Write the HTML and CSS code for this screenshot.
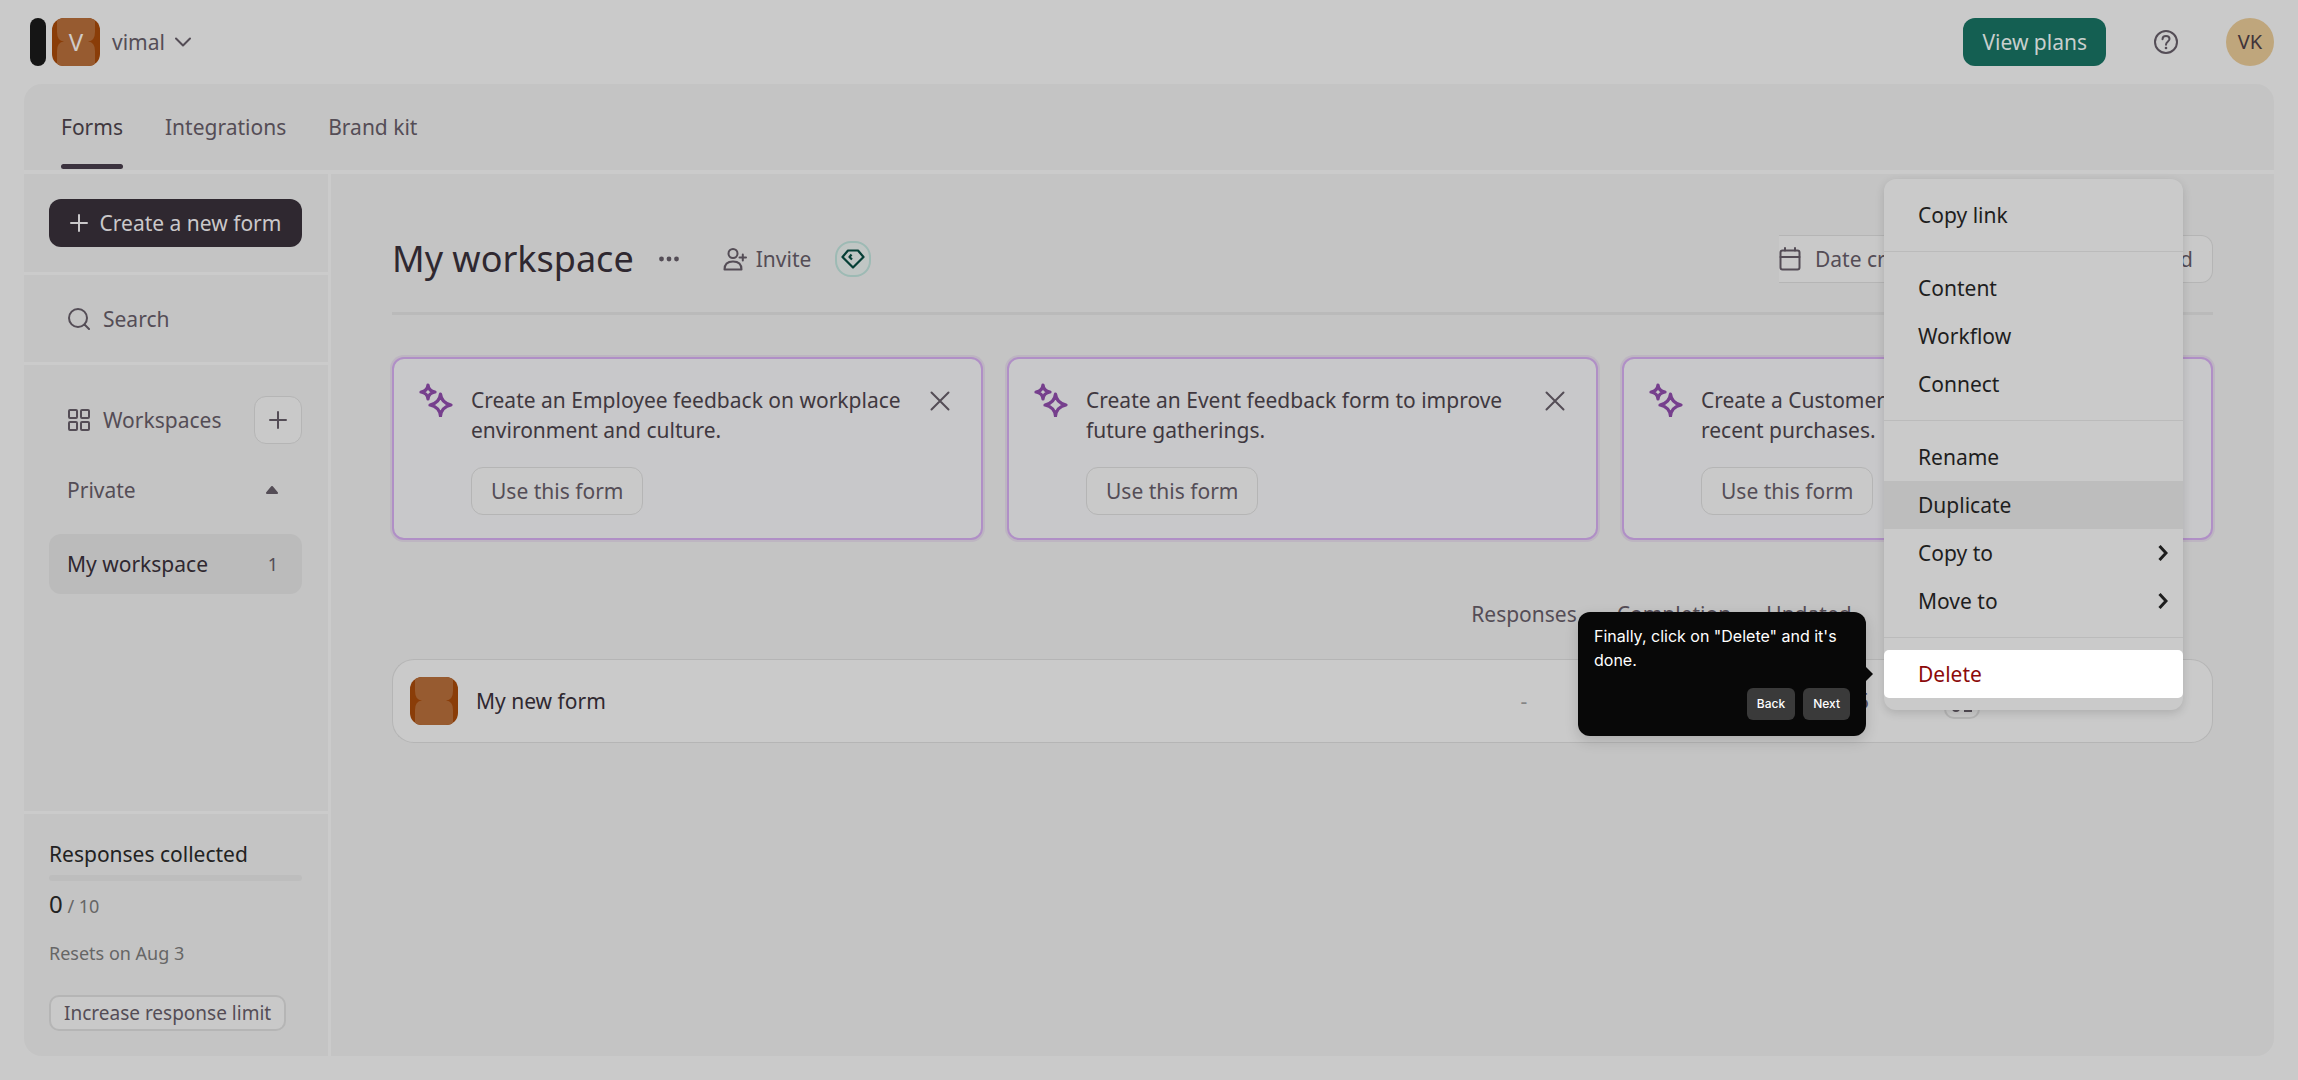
FILE: index.html
```html
<!DOCTYPE html>
<html lang="en">
<head>
<meta charset="utf-8">
<meta name="viewport" content="width=device-width, initial-scale=1">
<title>My workspace</title>
<link rel="stylesheet" href="styles.css">
</head>
<body>
<svg class="defs" width="0" height="0" aria-hidden="true">
  <symbol id="tile" viewBox="0 0 48 48"><rect width="48" height="48" fill="#8a3d08"/><path d="M5 0H43V14Q43 23 36 23.500Q43 24 43 33V48H5V33Q5 24 12 23.500Q5 23 5 14Z" fill="#975b30"/></symbol>
  <symbol id="plus" viewBox="0 0 18 18"><path d="M9 1V17M1 9H17" fill="none" stroke="currentColor" stroke-width="2" stroke-linecap="round"/></symbol>
  <symbol id="sparkle" viewBox="0 0 34 34"><path d="M9 2Q9.500 8 16 9Q9.500 10 9 16Q8.500 10 2 9Q8.500 8 9 2ZM21.500 11Q22.500 20 32 22Q22.500 24 21.500 33Q20.500 24 11 22Q20.500 20 21.500 11Z" fill="none" stroke="currentColor" stroke-width="3.200" stroke-linejoin="round"/></symbol>
  <symbol id="cross" viewBox="0 0 20 20"><path d="M1.500 1.500L18.500 18.500M18.500 1.500L1.500 18.500" fill="none" stroke="currentColor" stroke-width="2" stroke-linecap="round"/></symbol>
  <symbol id="arrow" viewBox="0 0 10 16"><path d="M1.500 1L8 8L1.500 15" fill="none" stroke="currentColor" stroke-width="3"/></symbol>
</svg>

<header class="topbar">
  <span class="brand-mark"></span>
  <button class="account" type="button">
    <span class="avatar"><svg class="tile"><use href="#tile"/></svg><span class="avatar-letter">V</span></span>
    <span>vimal</span>
    <svg class="chevron" width="16" height="10" viewBox="0 0 16 10"><path d="M1 1.500L8 8.500L15 1.500" fill="none" stroke="currentColor" stroke-width="2" stroke-linecap="round" stroke-linejoin="round"/></svg>
  </button>
  <button class="btn plans" type="button">View plans</button>
  <button class="icon-btn help" type="button" aria-label="Help">
    <svg width="24" height="24" viewBox="0 0 24 24" fill="none" stroke="currentColor" stroke-width="2"><circle cx="12" cy="12" r="11"/><path d="M8.500 9.300C8.500 7.300 10 6 12 6s3.500 1.300 3.500 3.100C15.500 11.500 12 11.700 12 14.700" stroke-linecap="round"/><circle cx="12" cy="18" r="1.300" fill="currentColor" stroke="none"/></svg>
  </button>
  <button class="user" type="button">VK</button>
</header>

<div class="panel">
  <nav class="tabs">
    <a class="tab active" href="#forms">Forms</a>
    <a class="tab" href="#integrations">Integrations</a>
    <a class="tab" href="#brand">Brand kit</a>
  </nav>

  <div class="body">
    <aside class="sidebar">
      <div class="side-create">
        <button class="btn create" type="button"><svg width="18" height="18"><use href="#plus"/></svg>Create a new form</button>
      </div>
      <div class="side-search">
        <button class="side-link" type="button">
          <svg width="22" height="22" viewBox="0 0 22 22" fill="none" stroke="currentColor" stroke-width="2"><circle cx="10" cy="10" r="9"/><path d="M16.500 16.500L21 21" stroke-linecap="round"/></svg>Search
        </button>
      </div>
      <div class="side-spaces">
        <div class="spaces-head">
          <span class="side-link">
            <svg width="22" height="22" viewBox="0 0 22 22" fill="none" stroke="currentColor" stroke-width="2"><rect x="1" y="1" width="8" height="8" rx="1"/><rect x="13" y="1" width="8" height="8" rx="1"/><rect x="1" y="13" width="8" height="8" rx="1"/><rect x="13" y="13" width="8" height="8" rx="1"/></svg>Workspaces
          </span>
          <button class="btn outline add" type="button" aria-label="Add workspace"><svg width="18" height="18"><use href="#plus"/></svg></button>
        </div>
        <button class="group" type="button"><span>Private</span><svg width="12" height="8" viewBox="0 0 12 8"><path d="M6 1L11 7H1Z" fill="currentColor" stroke="currentColor" stroke-width="2" stroke-linejoin="round"/></svg></button>
        <a class="space" href="#my-workspace"><span>My workspace</span><span class="count">1</span></a>
      </div>
      <div class="side-usage">
        <h2 class="usage-title">Responses collected</h2>
        <div class="usage-bar"></div>
        <p class="usage-count"><span class="usage-value">0</span> / 10</p>
        <p class="usage-reset">Resets on Aug 3</p>
        <button class="btn outline limit" type="button">Increase response limit</button>
      </div>
    </aside>

    <main class="main">
      <div class="title-row">
        <h1 class="title">My workspace</h1>
        <button class="icon-btn more" type="button" aria-label="More"><svg width="20" height="6" viewBox="0 0 20 6" fill="currentColor"><circle cx="2.500" cy="3" r="2.400"/><circle cx="10" cy="3" r="2.400"/><circle cx="17.500" cy="3" r="2.400"/></svg></button>
        <button class="icon-btn invite" type="button">
          <svg width="24" height="24" viewBox="0 0 24 24" fill="none" stroke="currentColor" stroke-width="2" stroke-linecap="round" stroke-linejoin="round"><circle cx="10" cy="6.500" r="4.500"/><path d="M1.500 22.500Q1.500 14.500 10 14.500T18.500 22.500Z"/><path d="M16.500 10.500H23M19.800 7.500V13.500"/></svg>Invite
        </button>
        <button class="gem" type="button" aria-label="Upgrade"><svg width="24" height="20" viewBox="0 0 24 20" fill="none" stroke="currentColor" stroke-width="2.200" stroke-linejoin="round"><path d="M7 1.500H17L22.500 8L12 18.500L1.500 8Z"/><path d="M10.500 5.500L8.500 8L11 10.500"/></svg></button>
        <div class="toolbar">
          <button class="sort" type="button">
            <svg width="22" height="24" viewBox="0 0 22 24" fill="none" stroke="currentColor" stroke-width="2" stroke-linejoin="round"><rect x="1.500" y="3.500" width="19" height="19" rx="2"/><path d="M1.500 10H20.500M6 1V3.500M16 1V3.500" stroke-linecap="round"/></svg>Date created
          </button>
          <button class="sort" type="button">Grid</button>
        </div>
      </div>

      <div class="cards">
        <article class="card">
          <svg class="spark" width="34" height="34"><use href="#sparkle"/></svg>
          <div class="card-body"><p class="card-text">Create an Employee feedback on workplace environment and culture.</p><button class="btn outline" type="button">Use this form</button></div>
          <button class="icon-btn close" type="button" aria-label="Dismiss"><svg width="20" height="20"><use href="#cross"/></svg></button>
        </article>
        <article class="card">
          <svg class="spark" width="34" height="34"><use href="#sparkle"/></svg>
          <div class="card-body"><p class="card-text">Create an Event feedback form to improve future gatherings.</p><button class="btn outline" type="button">Use this form</button></div>
          <button class="icon-btn close" type="button" aria-label="Dismiss"><svg width="20" height="20"><use href="#cross"/></svg></button>
        </article>
        <article class="card">
          <svg class="spark" width="34" height="34"><use href="#sparkle"/></svg>
          <div class="card-body"><p class="card-text">Create a Customer<br>recent purchases.</p><button class="btn outline" type="button">Use this form</button></div>
          <button class="icon-btn close" type="button" aria-label="Dismiss"><svg width="20" height="20"><use href="#cross"/></svg></button>
        </article>
      </div>

      <table class="forms">
        <colgroup><col><col class="c-responses"><col class="c-completion"><col class="c-updated"><col class="c-apps"><col class="c-actions"></colgroup>
        <thead><tr><th></th><th>Responses</th><th>Completion</th><th>Updated</th><th></th><th></th></tr></thead>
        <tbody>
          <tr>
            <td><a class="form-name" href="#form"><svg class="tile"><use href="#tile"/></svg>My new form</a></td>
            <td class="muted">-</td><td class="muted">-</td><td class="date">15 Jul 2025</td>
            <td><button class="app" type="button" aria-label="Integrations"><svg width="20" height="22" viewBox="0 0 20 22" fill="none" stroke="currentColor" stroke-width="2"><path d="M1 18Q1 21 4 21T7 18"/><path d="M12 21H20"/></svg></button></td><td></td>
          </tr>
        </tbody>
      </table>

      <div class="menu" role="menu">
        <button class="item" type="button" role="menuitem">Copy link</button>
        <hr class="rule">
        <button class="item" type="button" role="menuitem">Content</button>
        <button class="item" type="button" role="menuitem">Workflow</button>
        <button class="item" type="button" role="menuitem">Connect</button>
        <hr class="rule">
        <button class="item" type="button" role="menuitem">Rename</button>
        <button class="item hovered" type="button" role="menuitem">Duplicate</button>
        <button class="item" type="button" role="menuitem">Copy to<svg width="10" height="16"><use href="#arrow"/></svg></button>
        <button class="item" type="button" role="menuitem">Move to<svg width="10" height="16"><use href="#arrow"/></svg></button>
        <hr class="rule">
        <button class="item delete" type="button" role="menuitem">Delete</button>
      </div>

      <div class="tour" role="dialog" aria-label="Tour step">
        <p class="tour-text">Finally, click on "Delete" and it's done.</p>
        <div class="tour-actions"><button class="tour-btn" type="button">Back</button><button class="tour-btn" type="button">Next</button></div>
      </div>
    </main>
  </div>
</div>
</body>
</html>
```
FILE: styles.css
```css
* { box-sizing: border-box; }

:root {
  --page: #cacaca;
  --panel: #c4c4c4;
  --line: #cbcbcb;
  --border: #b5b5b5;
  --ink: #2f2830;
  --text: #544d56;
}

body {
  margin: 0;
  min-height: 100vh;
  display: flex;
  flex-direction: column;
  padding: 0 24px 24px;
  background: var(--page);
  color: var(--text);
  font: 21px/30px "Noto Sans", sans-serif;
}

h1, h2, p { margin: 0; font-weight: 400; }
a { color: inherit; text-decoration: none; }
svg { flex: none; display: block; }
.defs { position: absolute; }

button {
  margin: 0;
  padding: 0;
  border: 0;
  background: none;
  color: inherit;
  font: inherit;
  white-space: nowrap;
}

.btn {
  display: flex;
  align-items: center;
  justify-content: center;
  height: 48px;
  padding: 0 19px;
  border-radius: 12px;
}
.outline { border: 1px solid var(--border); background: #c9c9c9; }
.icon-btn { display: flex; align-items: center; }
.tile { width: 48px; height: 48px; border-radius: 12px; }

/* Top bar */
.topbar { display: flex; align-items: center; height: 84px; padding-left: 6px; }
.brand-mark { width: 16px; height: 48px; border-radius: 8px; background: #151515; }
.account { display: flex; align-items: center; gap: 10px; margin: 0 auto 0 6px; }
.avatar { display: grid; place-items: center; margin-right: 2px; }
.avatar > * { grid-area: 1 / 1; }
.avatar-letter { color: #d0cbc8; font-size: 24px; }
.plans { background: #145f52; color: #c8cfcd; }
.help { margin: 0 48px; }
.user { width: 48px; height: 48px; border-radius: 50%; background: #bfa67c; color: #40343a; font-size: 20px; }

/* Panel and tabs */
.panel { flex: 1; display: flex; flex-direction: column; border-radius: 18px; background: var(--panel); }
.tabs { display: flex; gap: 42px; height: 90px; padding: 0 37px; border-bottom: 4px solid var(--line); }
.tab { display: flex; align-items: center; position: relative; }
.active { color: #40383f; }
.active::after { content: ""; position: absolute; left: 0; right: 0; bottom: 1px; height: 5px; border-radius: 3px; background: #3b323e; }
.body { flex: 1; display: flex; }

/* Sidebar */
.sidebar { flex: none; width: 307px; display: flex; flex-direction: column; border-right: 3px solid var(--line); }
.side-create, .side-search { border-bottom: 3px solid var(--line); }
.side-create { padding: 25px 26px 25px 25px; }
.create { width: 100%; gap: 12px; background: #2f2830; color: #cac8ca; }
.side-search { padding: 29px 44px 28px; }
.side-link { display: flex; align-items: center; gap: 13px; }
.side-spaces { flex: 1; padding: 31px 26px 31px 25px; }
.spaces-head { display: flex; align-items: center; justify-content: space-between; padding-left: 19px; }
.add { width: 48px; padding: 0; }
.group { display: flex; align-items: center; justify-content: space-between; width: 100%; margin: 31px 0 29px; padding: 0 24px 0 18px; }
.space { display: flex; align-items: center; justify-content: space-between; height: 60px; padding: 0 24px 0 18px; border-radius: 12px; background: #bbb; color: var(--ink); }
.count { color: var(--text); font-size: 18px; }
.side-usage { padding: 25px 26px 25px 25px; border-top: 3px solid var(--line); }
.usage-title { color: #222; font-size: 21px; }
.usage-bar { height: 6px; margin-top: 6px; border-radius: 3px; background: #bdbdbd; }
.usage-count { margin-top: 8px; color: #666; font-size: 18px; }
.usage-value { color: #222; font-size: 24px; }
.usage-reset { margin: 17px 0 27px; color: #666; font-size: 18px; }
.limit { height: 36px; padding: 0 13px; border-width: 2px; border-radius: 10px; font-size: 19px; }

/* Main column */
.main { position: relative; flex: 1; min-width: 0; padding: 59px 61px; }
.title-row { display: flex; align-items: center; height: 82px; padding-bottom: 27px; border-bottom: 3px solid #bababa; }
.title { color: var(--ink); font-size: 36px; line-height: 48px; }
.more { margin: 0 44px 0 25px; }
.invite { gap: 9px; }
.gem { display: grid; place-items: center; width: 36px; height: 36px; margin-left: 24px; border: 2px solid #9dbab4; border-radius: 16px; background: #c0c6c4; color: #063f36; }
.toolbar { display: flex; align-items: center; justify-content: space-between; width: 434px; height: 48px; margin-left: auto; padding-right: 19px; border: 1px solid var(--border); border-left: 0; border-radius: 0 12px 12px 0; background: #c9c9c9; }
.sort { display: flex; align-items: center; gap: 14px; }

.cards { display: grid; grid-template-columns: repeat(3, 1fr); gap: 24px; margin-top: 42px; }
.card { display: flex; align-items: flex-start; padding: 26px 31px 23px 25px; border: 2px solid #b08fc6; border-radius: 12px; background: #c8c8ca; box-shadow: 0 0 0 2px #bdb5c1; }
.spark { color: #763f8d; margin-top: -2px; }
.card-body { flex: 1; min-width: 0; margin-left: 18px; }
.card-text { margin-bottom: 22px; color: #40383f; }
.close { margin: 6px 0 0 12px; }

/* Forms table */
.forms { width: 100%; margin-top: 58px; border-collapse: separate; border-spacing: 0; table-layout: fixed; }
.c-responses { width: 150px; }
.c-completion { width: 150px; }
.c-updated { width: 120px; }
.c-apps { width: 186px; }
.c-actions { width: 158px; }
th { padding: 0 0 29px; font-weight: 400; white-space: nowrap; line-height: 32px; }
td { height: 84px; padding: 0; border: 1px solid var(--border); border-width: 1px 0; background: #cacaca; text-align: center; white-space: nowrap; }
td:first-child { padding-left: 17px; border-left-width: 1px; border-radius: 22px 0 0 22px; }
td:last-child { border-right-width: 1px; border-radius: 0 22px 22px 0; }
.form-name { display: flex; align-items: center; gap: 18px; color: var(--ink); }
.muted { color: #858585; }
.date { text-align: right; }
.app { display: grid; place-items: center; width: 36px; height: 36px; margin: 0 auto; border: 2px solid var(--border); border-radius: 10px; }

/* Context menu */
.menu { position: absolute; top: 5px; right: 91px; width: 299px; padding: 12px 0; border-radius: 12px; background: var(--page); box-shadow: 0 3px 10px rgba(0, 0, 0, .14); color: #1e1e1e; }
.item { display: flex; align-items: center; justify-content: space-between; width: 100%; height: 48px; padding: 0 15px 0 34px; }
.hovered { background: #bdbdbd; }
.delete { border-radius: 5px; background: #fff; color: #8c0a0a; }
.rule { height: 1px; margin: 12px 0; border: 0; background: #bbb; }

/* Tour tooltip */
.tour { position: absolute; top: 438px; right: 408px; width: 288px; padding: 12px 16px 16px; border-radius: 12px; background: #080808; box-shadow: 0 5px 14px rgba(0, 0, 0, .15); color: #fff; font: 16px/24px Inter, sans-serif; }
.tour::after { content: ""; position: absolute; top: 55px; left: 100%; border: 7px solid transparent; border-left-color: #080808; border-right-width: 0; }
.tour-actions { display: flex; justify-content: flex-end; gap: 8px; margin-top: 16px; }
.tour-btn { height: 32px; padding: 0 10px; border-radius: 6px; background: #3a3a3a; font-size: 12px; font-weight: 500; }
```
